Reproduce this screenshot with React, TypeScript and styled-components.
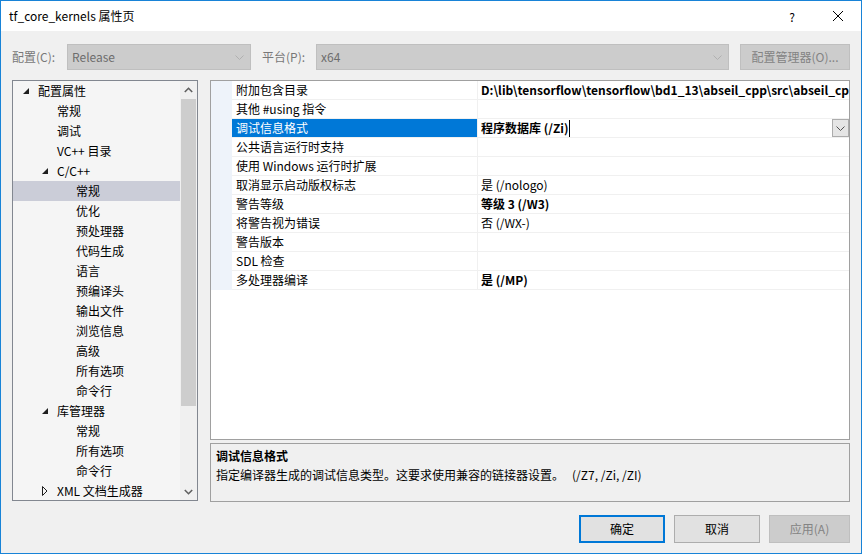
import React from 'react';
import styled, { createGlobalStyle } from 'styled-components';

const Global = createGlobalStyle`
  html, body { margin: 0; padding: 0; background: #f0f0f0; }
  body {
    font-family: "Noto Sans CJK SC", "Noto Sans", sans-serif;
    font-size: 12px;
    color: #000;
  }
  * { box-sizing: border-box; }
`;

const Window = styled.div`
  width: 862px;
  height: 554px;
  border: 1px solid #1883d7;
  background: #f0f0f0;
  display: flex;
  flex-direction: column;
  overflow: hidden;
`;

const TitleBar = styled.div`
  height: 30px;
  flex-shrink: 0;
  background: #fff;
  display: flex;
  align-items: center;
  padding-left: 8px;
`;

const TitleText = styled.div`
  font-size: 12px;
  line-height: 16px;
  flex: 1;
`;

const CaptionButton = styled.div`
  width: 46px;
  height: 30px;
  display: flex;
  align-items: center;
  justify-content: center;
  font-size: 12px;
  color: #000;
`;

const Body = styled.div`
  flex: 1;
  display: flex;
  flex-direction: column;
  padding: 13px 11px 0 11px;
`;

const Toolbar = styled.div`
  height: 26px;
  display: flex;
  align-items: center;
`;

const Label = styled.div<{ $w: number }>`
  width: ${(p) => p.$w}px;
  color: #787878;
  line-height: 16px;
  flex-shrink: 0;
`;

const Combo = styled.div<{ $w: number }>`
  width: ${(p) => p.$w}px;
  height: 26px;
  background: #cccccc;
  border: 1px solid #bfbfbf;
  display: flex;
  align-items: center;
  padding: 0 6px 0 4px;
  color: #6d6d6d;
  flex-shrink: 0;
  span { flex: 1; line-height: 16px; }
`;

const Spacer = styled.div<{ $w: number }>`
  width: ${(p) => p.$w}px;
  flex-shrink: 0;
`;

const DisabledButton = styled.div<{ $w: number }>`
  width: ${(p) => p.$w}px;
  height: 26px;
  background: #cccccc;
  border: 1px solid #bfbfbf;
  color: #838383;
  display: flex;
  align-items: center;
  justify-content: center;
  line-height: 16px;
  white-space: nowrap;
`;

const Main = styled.div`
  margin-top: 10px;
  height: 422px;
  display: flex;
  gap: 12px;
`;

const TreePanel = styled.div`
  width: 186px;
  height: 421px;
  border: 1px solid #828790;
  background: #f5f5f5;
  display: flex;
  overflow: hidden;
`;

const TreeList = styled.div`
  flex: 1;
  display: flex;
  flex-direction: column;
  overflow: hidden;
`;

const TreeRow = styled.div<{ $level: number; $selected?: boolean }>`
  height: 20px;
  flex-shrink: 0;
  display: flex;
  align-items: center;
  padding-left: ${(p) => 9 + p.$level * 19}px;
  background: ${(p) => (p.$selected ? '#cbcdd8' : 'transparent')};
  white-space: nowrap;
  line-height: 16px;
`;

const Expander = styled.div`
  width: 16px;
  height: 20px;
  display: flex;
  align-items: center;
  padding-left: 1px;
  flex-shrink: 0;
`;

const ScrollBar = styled.div`
  width: 17px;
  background: #f0f0f0;
  display: flex;
  flex-direction: column;
  align-items: center;
  flex-shrink: 0;
`;

const ScrollArrow = styled.div`
  height: 17px;
  width: 17px;
  display: flex;
  align-items: center;
  justify-content: center;
  flex-shrink: 0;
`;

const ScrollThumb = styled.div`
  width: 15px;
  height: 307px;
  margin-top: 1px;
  background: #cdcdcd;
`;

const ScrollFill = styled.div`
  flex: 1;
`;

const RightCol = styled.div`
  flex: 1;
  display: flex;
  flex-direction: column;
  gap: 3px;
`;

const Grid = styled.div`
  height: 360px;
  border: 1px solid #a0a0a0;
  background: #fff;
  overflow: hidden;
`;

const GridRow = styled.div`
  display: grid;
  grid-template-columns: 21px 246px 1fr;
  height: 19px;
`;

const MarginCell = styled.div`
  background: #eef3fa;
`;

const NameCell = styled.div<{ $selected?: boolean }>`
  border-bottom: 1px solid #f0f0f0;
  border-right: 1px solid #f0f0f0;
  background: ${(p) => (p.$selected ? '#0078d7' : '#fff')};
  color: ${(p) => (p.$selected ? '#fff' : '#000')};
  padding-left: 4px;
  display: flex;
  align-items: center;
  line-height: 16px;
  white-space: nowrap;
`;

const ValueCell = styled.div<{ $bold?: boolean }>`
  border-bottom: 1px solid #f0f0f0;
  padding-left: 3px;
  display: flex;
  align-items: center;
  font-weight: ${(p) => (p.$bold ? 700 : 400)};
  line-height: 16px;
  white-space: nowrap;
  overflow: hidden;
  position: relative;
`;

const Caret = styled.span`
  display: inline-block;
  width: 1px;
  height: 17px;
  background: #000;
  margin-left: 1px;
`;

const DropButton = styled.div`
  position: absolute;
  right: 0;
  top: 0;
  width: 17px;
  height: 18px;
  background: #e5e5e5;
  border: 1px solid #acacac;
  display: flex;
  align-items: center;
  justify-content: center;
`;

const Desc = styled.div`
  height: 59px;
  border: 1px solid #a0a0a0;
  background: #f0f0f0;
  padding: 2px 5px;
  line-height: 19px;
  white-space: pre;
`;

const DescTitle = styled.div`
  font-weight: 700;
`;

const Footer = styled.div`
  margin-top: 13px;
  height: 28px;
  display: flex;
  justify-content: flex-end;
  gap: 9px;
`;

const DialogButton = styled.div<{ $w: number; $kind: 'default' | 'normal' | 'disabled' }>`
  width: ${(p) => p.$w}px;
  height: 28px;
  display: flex;
  align-items: center;
  justify-content: center;
  line-height: 16px;
  background: ${(p) => (p.$kind === 'disabled' ? '#cccccc' : '#e1e1e1')};
  border: ${(p) =>
    p.$kind === 'default' ? '2px solid #0078d7' : p.$kind === 'disabled' ? '1px solid #bfbfbf' : '1px solid #adadad'};
  color: ${(p) => (p.$kind === 'disabled' ? '#838383' : '#000')};
`;

const ChevronDown = ({ color = '#a0a0a0', w = 9 }: { color?: string; w?: number }) => (
  <svg width={w} height={5} viewBox="0 0 9 5">
    <polyline points="0.5,0.5 4.5,4.5 8.5,0.5" fill="none" stroke={color} strokeWidth="1" />
  </svg>
);

const ChevronUpBold = () => (
  <svg width={9} height={6} viewBox="0 0 9 6">
    <polyline points="0.8,5 4.5,1.3 8.2,5" fill="none" stroke="#606060" strokeWidth="1.6" />
  </svg>
);

const ChevronDownBold = () => (
  <svg width={9} height={6} viewBox="0 0 9 6">
    <polyline points="0.8,1 4.5,4.7 8.2,1" fill="none" stroke="#606060" strokeWidth="1.6" />
  </svg>
);

const OpenTri = () => (
  <svg width={6} height={6} viewBox="0 0 6 6">
    <polygon points="6,0 6,6 0,6" fill="#1e1e1e" />
  </svg>
);

const ClosedTri = () => (
  <svg width={6} height={10} viewBox="0 0 6 10">
    <polygon points="0.5,0.5 5,5 0.5,9.5" fill="none" stroke="#1e1e1e" strokeWidth="1" />
  </svg>
);

const CloseIcon = () => (
  <svg width={10} height={10} viewBox="0 0 10 10">
    <line x1="0" y1="0" x2="10" y2="10" stroke="#000" strokeWidth="1" />
    <line x1="10" y1="0" x2="0" y2="10" stroke="#000" strokeWidth="1" />
  </svg>
);

type TreeItem = { level: number; text: string; exp?: 'open' | 'closed'; selected?: boolean };

const tree: TreeItem[] = [
  { level: 0, text: '配置属性', exp: 'open' },
  { level: 1, text: '常规' },
  { level: 1, text: '调试' },
  { level: 1, text: 'VC++ 目录' },
  { level: 1, text: 'C/C++', exp: 'open' },
  { level: 2, text: '常规', selected: true },
  { level: 2, text: '优化' },
  { level: 2, text: '预处理器' },
  { level: 2, text: '代码生成' },
  { level: 2, text: '语言' },
  { level: 2, text: '预编译头' },
  { level: 2, text: '输出文件' },
  { level: 2, text: '浏览信息' },
  { level: 2, text: '高级' },
  { level: 2, text: '所有选项' },
  { level: 2, text: '命令行' },
  { level: 1, text: '库管理器', exp: 'open' },
  { level: 2, text: '常规' },
  { level: 2, text: '所有选项' },
  { level: 2, text: '命令行' },
  { level: 1, text: 'XML 文档生成器', exp: 'closed' },
];

type Prop = { name: string; value?: string; bold?: boolean; selected?: boolean };

const props: Prop[] = [
  { name: '附加包含目录', value: 'D:\\lib\\tensorflow\\tensorflow\\bd1_13\\abseil_cpp\\src\\abseil_cpp;D:\\lib', bold: true },
  { name: '其他 #using 指令' },
  { name: '调试信息格式', value: '程序数据库 (/Zi)', bold: true, selected: true },
  { name: '公共语言运行时支持' },
  { name: '使用 Windows 运行时扩展' },
  { name: '取消显示启动版权标志', value: '是 (/nologo)' },
  { name: '警告等级', value: '等级 3 (/W3)', bold: true },
  { name: '将警告视为错误', value: '否 (/WX-)' },
  { name: '警告版本' },
  { name: 'SDL 检查' },
  { name: '多处理器编译', value: '是 (/MP)', bold: true },
];

export default function App() {
  return (
    <Window>
      <Global />
      <TitleBar>
        <TitleText>tf_core_kernels 属性页</TitleText>
        <CaptionButton>?</CaptionButton>
        <CaptionButton>
          <CloseIcon />
        </CaptionButton>
      </TitleBar>
      <Body>
        <Toolbar>
          <Label $w={55}>配置(C):</Label>
          <Combo $w={184}>
            <span>Release</span>
            <ChevronDown color="#b0b0b0" />
          </Combo>
          <Spacer $w={11} />
          <Label $w={54}>平台(P):</Label>
          <Combo $w={413}>
            <span>x64</span>
            <ChevronDown color="#b0b0b0" />
          </Combo>
          <Spacer $w={11} />
          <DisabledButton $w={111}>配置管理器(O)...</DisabledButton>
        </Toolbar>
        <Main>
          <TreePanel>
            <TreeList>
              {tree.map((t, i) => (
                <TreeRow key={i} $level={t.level} $selected={t.selected}>
                  <Expander>
                    {t.exp === 'open' && <OpenTri />}
                    {t.exp === 'closed' && <ClosedTri />}
                  </Expander>
                  {t.text}
                </TreeRow>
              ))}
            </TreeList>
            <ScrollBar>
              <ScrollArrow>
                <ChevronUpBold />
              </ScrollArrow>
              <ScrollThumb />
              <ScrollFill />
              <ScrollArrow>
                <ChevronDownBold />
              </ScrollArrow>
            </ScrollBar>
          </TreePanel>
          <RightCol>
            <Grid>
              {props.map((p, i) => (
                <GridRow key={i}>
                  <MarginCell />
                  <NameCell $selected={p.selected}>{p.name}</NameCell>
                  <ValueCell $bold={p.bold}>
                    {p.value}
                    {p.selected && <Caret />}
                    {p.selected && (
                      <DropButton>
                        <ChevronDown color="#505050" />
                      </DropButton>
                    )}
                  </ValueCell>
                </GridRow>
              ))}
            </Grid>
            <Desc>
              <DescTitle>调试信息格式</DescTitle>
              <div>指定编译器生成的调试信息类型。这要求使用兼容的链接器设置。   (/Z7, /Zi, /ZI)</div>
            </Desc>
          </RightCol>
        </Main>
        <Footer>
          <DialogButton $w={86} $kind="default">确定</DialogButton>
          <DialogButton $w={86} $kind="normal">取消</DialogButton>
          <DialogButton $w={81} $kind="disabled">应用(A)</DialogButton>
        </Footer>
      </Body>
    </Window>
  );
}
